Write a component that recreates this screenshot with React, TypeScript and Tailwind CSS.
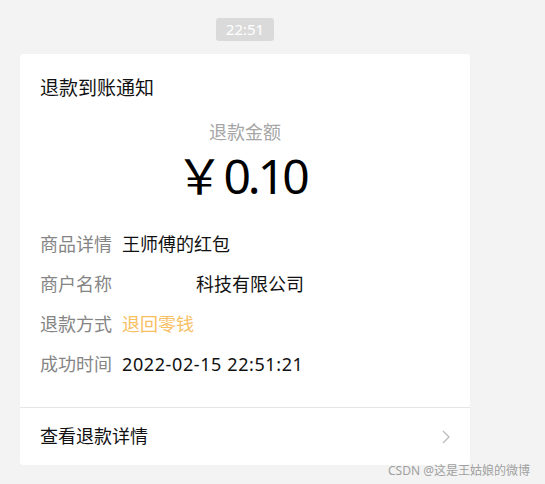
const rows = [
  { label: "商品详情", value: "王师傅的红包" },
  { label: "商户名称", value: "科技有限公司", blank: true },
  { label: "退款方式", value: "退回零钱", accent: true },
  { label: "成功时间", value: "2022-02-15 22:51:21", digits: true },
];

const App = () => {
  return (
    <div className="relative min-h-screen bg-[#f3f3f3] pt-[18px] font-['Noto_Sans','Noto_Sans_CJK_SC',sans-serif]">
      <div className="ml-[20px] flex w-[450px] flex-col items-center">
        {/* time stamp */}
        <div className="h-[23px] rounded-[3px] bg-[#dadada] px-[10px] text-[15px] leading-[23px] text-white">
          22:51
        </div>

        {/* notice card */}
        <div className="mt-[13px] w-full rounded-[4px] bg-white">
          <div className="px-[20px] pt-[22px] pb-[31px]">
            <h1 className="text-[19px] leading-[24px] text-[#111]">退款到账通知</h1>
            <p className="mt-[20px] text-center text-[18px] leading-[24px] text-[#a6a6a6]">
              退款金额
            </p>
            <p className="mt-[4px] pr-[8px] text-center text-[48px] leading-[56px] text-black">
              <span>￥</span>
              <span className="tracking-[-3px]">0.10</span>
            </p>

            <div className="mt-[28px] flex flex-col gap-[16px]">
              {rows.map((r) => (
                <div key={r.label} className="flex text-[18px] leading-[24px]">
                  <span className="w-[82px] shrink-0 text-[#858585]">{r.label}</span>
                  {r.blank && <span className="w-[74px] shrink-0" />}
                  <span
                    className={
                      r.accent
                        ? "text-[#f9c063]"
                        : r.digits
                          ? "tracking-[0.6px] text-[#111]"
                          : "text-[#111]"
                    }
                  >
                    {r.value}
                  </span>
                </div>
              ))}
            </div>
          </div>

          {/* footer link */}
          <div className="flex h-[58px] items-center justify-between border-t border-[#e6e6e6] px-[20px]">
            <span className="text-[18px] text-[#111]">查看退款详情</span>
            <svg width="8" height="14" viewBox="0 0 8 14" fill="none">
              <path d="M1 1l6 6-6 6" stroke="#b8b8b8" strokeWidth="1.2" />
            </svg>
          </div>
        </div>
      </div>

      {/* watermark */}
      <span className="absolute left-[388px] top-[463px] text-[12px] leading-[16px] text-[#a0a0a0]">
        CSDN @这是王姑娘的微博
      </span>
    </div>
  );
};

export default App;
